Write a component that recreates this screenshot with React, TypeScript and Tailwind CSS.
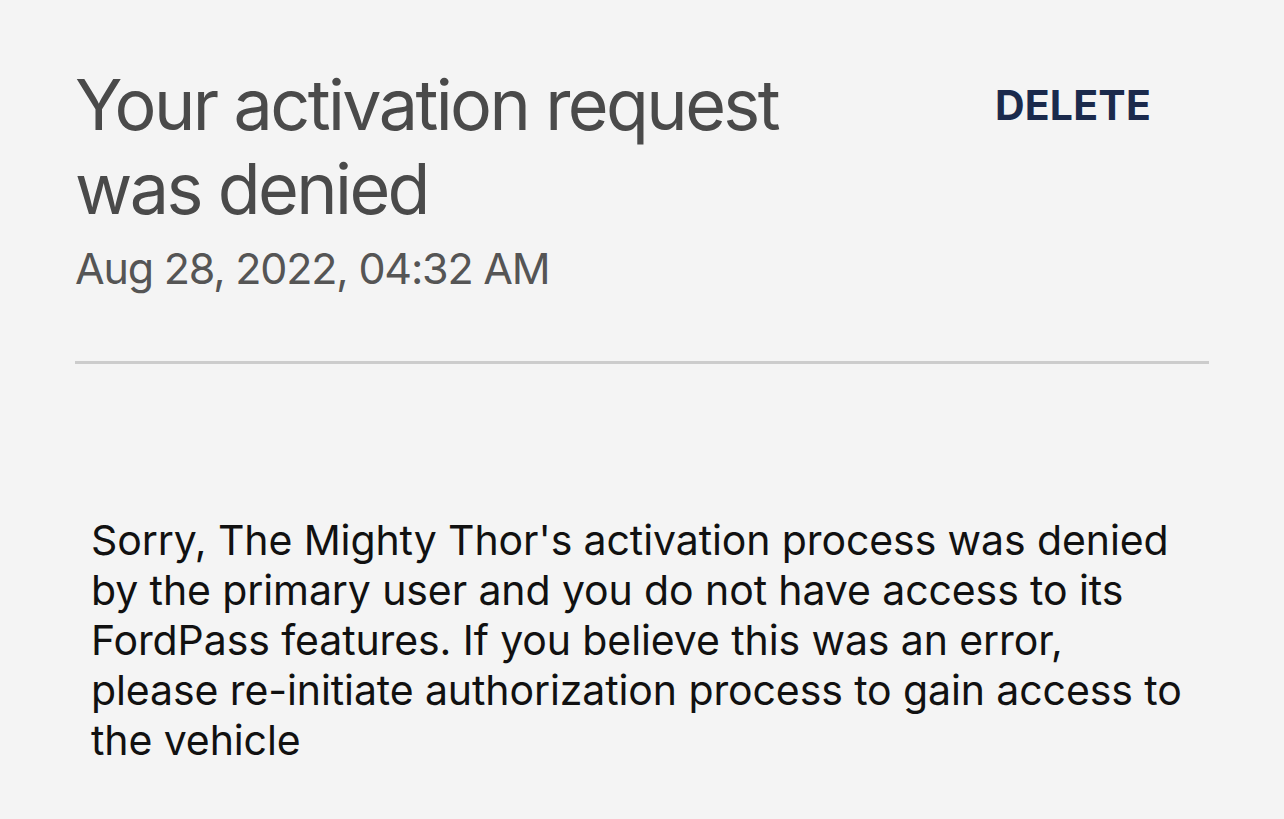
import React from 'react';

const bodyLines = [
  "Sorry, The Mighty Thor's activation process was denied",
  'by the primary user and you do not have access to its',
  'FordPass features. If you believe this was an error,',
  'please re-initiate authorization process to gain access to',
  'the vehicle',
];

export default function App() {
  return (
    <div
      className="min-h-screen w-full bg-[#f4f4f4] px-[75px] pt-[63px]"
      style={{ fontFamily: 'Inter, "Noto Sans", sans-serif' }}
    >
      {/* Header */}
      <div className="flex items-start justify-between">
        <h1 className="text-[70px] leading-[84px] font-normal text-[#4a4a4a] tracking-[-2.6px]">
          Your activation request
          <br />
          was denied
        </h1>
        <button className="mt-[17px] mr-[58px] text-[41px] leading-[50px] font-bold tracking-[0.2px] text-[#1b2a4c]">
          DELETE
        </button>
      </div>

      {/* Date */}
      <div className="mt-[12px] text-[43px] leading-[50px] text-[#555555] tracking-[-1.2px]">
        Aug 28, 2022, 04:32 AM
      </div>

      {/* Divider */}
      <div className="mt-[68px] h-[3px] bg-[#cccccc]" />

      {/* Message */}
      <div className="mt-[151px] pl-[16px] text-[41px] leading-[50px] text-[#111111] tracking-[-0.1px]">
        {bodyLines.map((line) => (
          <div key={line} className="whitespace-nowrap">
            {line}
          </div>
        ))}
      </div>
    </div>
  );
}
